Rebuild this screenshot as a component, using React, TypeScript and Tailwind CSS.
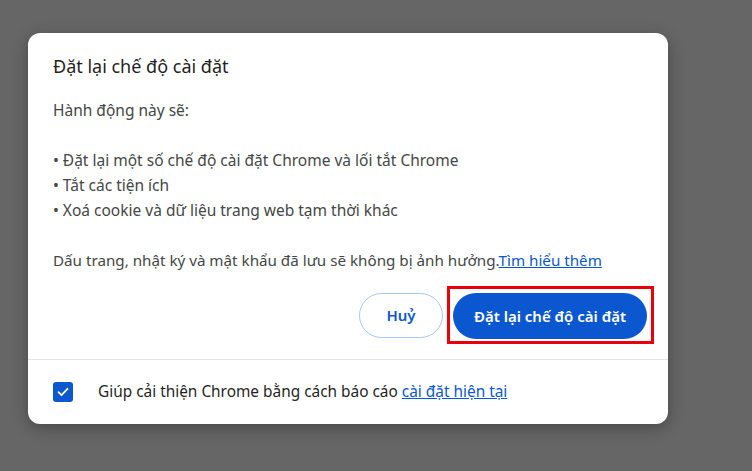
import React from 'react';

const font = { fontFamily: '"Noto Sans", "Liberation Sans", sans-serif' };

function CheckBox() {
    return (
        <span className="flex h-5 w-5 shrink-0 items-center justify-center rounded-[3px] bg-[#0b57d0]">
            <svg viewBox="0 0 20 20" className="h-5 w-5" fill="none">
                <path d="M5.5 10.2l3 3 6-6.4" stroke="#fff" strokeWidth="1.8" strokeLinecap="round" strokeLinejoin="round" />
            </svg>
        </span>
    );
}

export default function App() {
    return (
        <div className="h-[471px] w-[752px] overflow-hidden bg-[#666666] pl-[28px] pt-[33px] [font-family:'Noto_Sans','Liberation_Sans',sans-serif]">
            <div className="w-[640px] rounded-xl bg-white shadow-[0_4px_16px_rgba(0,0,0,0.3)]">
                <div className="pl-[25px] pr-[21px] pt-[21px] pb-5">
                    <h1 className="text-[18px] leading-[25px] text-[#1f1f1f]">Đặt lại chế độ cài đặt</h1>
                    <div className="mt-[19px] text-[15.5px] leading-[25px] text-[#444746]">
                        <p>Hành động này sẽ:</p>
                        <br />
                        <p>• Đặt lại một số chế độ cài đặt Chrome và lối tắt Chrome</p>
                        <p>• Tắt các tiện ích</p>
                        <p>• Xoá cookie và dữ liệu trang web tạm thời khác</p>
                        <br />
                        <p className="text-[15.2px]">
                            Dấu trang, nhật ký và mật khẩu đã lưu sẽ không bị ảnh hưởng.
                            <a href="#" className="text-[#0b57d0] underline">Tìm hiểu thêm</a>
                        </p>
                    </div>
                    <div className="mt-[20px] flex justify-end gap-[10px]">
                        <button className="h-[45px] w-[84px] rounded-full border border-[#a8c7fa] text-[15px] font-semibold text-[#0b57d0]">
                            Huỷ
                        </button>
                        <div className="relative">
                            <button className="h-[46px] w-[194px] rounded-full bg-[#0b57d0] text-[15px] font-semibold text-white">
                                Đặt lại chế độ cài đặt
                            </button>
                            <span className="pointer-events-none absolute -left-[6px] -right-[7px] -top-[7px] -bottom-[5px] border-[3px] border-[#e8000b]" />
                        </div>
                    </div>
                </div>
                <div className="flex h-[65px] items-center gap-[25px] border-t border-[#e3e3e3] pl-[25px] text-[15.4px] text-[#1f1f1f]" style={font}>
                    <CheckBox />
                    <span>
                        Giúp cải thiện Chrome bằng cách báo cáo{' '}
                        <a href="#" className="text-[#0b57d0] underline">cài đặt hiện tại</a>
                    </span>
                </div>
            </div>
        </div>
    );
}
